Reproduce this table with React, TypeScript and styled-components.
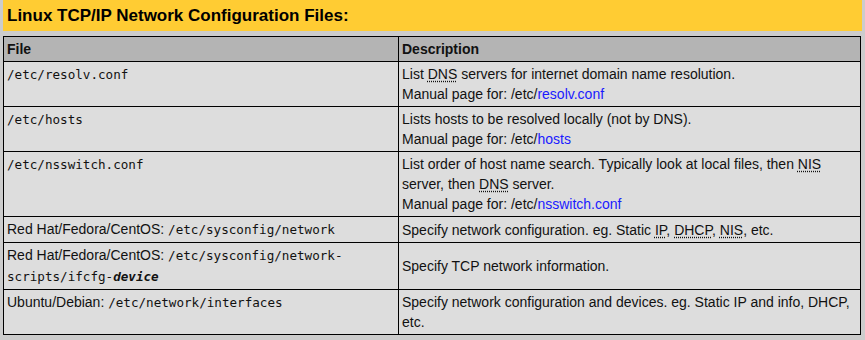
import React from 'react';
import styled, { createGlobalStyle } from 'styled-components';

const GlobalStyle = createGlobalStyle`
  body {
    margin: 0;
    background: #cccccc;
    font-family: 'Liberation Sans', Arial, sans-serif;
  }
`;

const Page = styled.div`
  padding: 0 3px 0 3px;
  width: 859px;
`;

const TitleBar = styled.h3`
  margin: 0;
  background: #ffcc33;
  color: #000;
  font-size: 17px;
  font-weight: bold;
  line-height: 31px;
  height: 31px;
  padding: 0 4px;
`;

const Table = styled.table`
  margin-top: 5px;
  width: 858px;
  border-collapse: collapse;
  border: 1px solid #000;
  background: #dddddd;
  font-size: 14px;
  line-height: 20px;
  color: #111;
  table-layout: fixed;
`;

const HeadCell = styled.th`
  background: #b4b4b4;
  border: 1px solid #000;
  text-align: left;
  font-weight: bold;
  padding: 2px 3px;
  height: 20px;
`;

const Cell = styled.td<{ $top?: boolean }>`
  border: 1px solid #000;
  padding: 2px 3px;
  vertical-align: ${(p) => (p.$top ? 'top' : 'middle')};
`;

const Mono = styled.code`
  font-family: 'DejaVu Sans Mono', 'Liberation Mono', monospace;
  font-size: 12.6px;
  line-height: 20px;
  color: #111;
`;

const Abbr = styled.abbr`
  text-decoration: underline dotted;
  text-underline-offset: 2px;
`;

const ManLink = styled.a`
  color: #1a1aff;
  text-decoration: none;
`;

const Manual = ({ name }: { name: string }) => (
  <>
    <br />
    Manual page for: /etc/<ManLink href="#">{name}</ManLink>
  </>
);

const App = () => (
  <Page>
    <GlobalStyle />
    <TitleBar>Linux TCP/IP Network Configuration Files:</TitleBar>
    <Table>
      <colgroup>
        <col style={{ width: 395 }} />
        <col />
      </colgroup>
      <thead>
        <tr>
          <HeadCell>File</HeadCell>
          <HeadCell>Description</HeadCell>
        </tr>
      </thead>
      <tbody>
        <tr>
          <Cell $top><Mono>/etc/resolv.conf</Mono></Cell>
          <Cell>
            List <Abbr title="Domain Name System">DNS</Abbr> servers for internet domain name resolution.
            <Manual name="resolv.conf" />
          </Cell>
        </tr>
        <tr>
          <Cell $top><Mono>/etc/hosts</Mono></Cell>
          <Cell>
            Lists hosts to be resolved locally (not by DNS).
            <Manual name="hosts" />
          </Cell>
        </tr>
        <tr>
          <Cell $top><Mono>/etc/nsswitch.conf</Mono></Cell>
          <Cell>
            List order of host name search. Typically look at local files, then{' '}
            <Abbr title="Network Information Service">NIS</Abbr> server, then{' '}
            <Abbr title="Domain Name System">DNS</Abbr> server.
            <Manual name="nsswitch.conf" />
          </Cell>
        </tr>
        <tr>
          <Cell $top>Red Hat/Fedora/CentOS: <Mono>/etc/sysconfig/network</Mono></Cell>
          <Cell>
            Specify network configuration. eg. Static <Abbr title="Internet Protocol">IP</Abbr>,{' '}
            <Abbr title="Dynamic Host Configuration Protocol">DHCP</Abbr>,{' '}
            <Abbr title="Network Information Service">NIS</Abbr>, etc.
          </Cell>
        </tr>
        <tr>
          <Cell $top>
            Red Hat/Fedora/CentOS: <Mono>/etc/sysconfig/network-</Mono>
            <br />
            <Mono>scripts/ifcfg-<b><i>device</i></b></Mono>
          </Cell>
          <Cell>Specify TCP network information.</Cell>
        </tr>
        <tr>
          <Cell $top>Ubuntu/Debian: <Mono>/etc/network/interfaces</Mono></Cell>
          <Cell>Specify network configuration and devices. eg. Static IP and info, DHCP, etc.</Cell>
        </tr>
      </tbody>
    </Table>
  </Page>
);

export default App;
